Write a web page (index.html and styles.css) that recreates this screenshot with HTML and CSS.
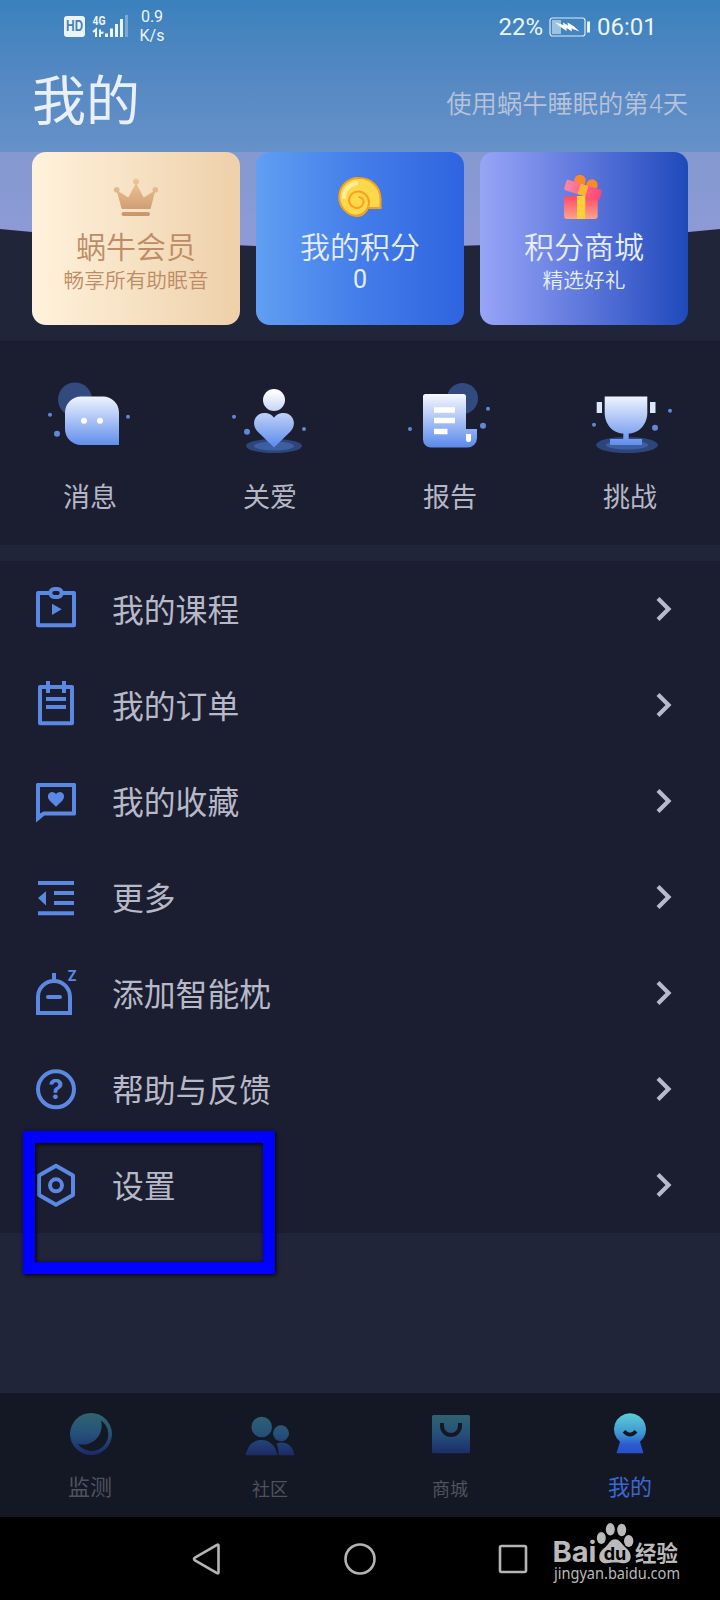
FILE: index.html
```html
<!DOCTYPE html>
<html lang="zh-CN">
<head>
  <meta charset="UTF-8">
  <meta name="viewport" content="width=device-width, initial-scale=1.0">
  <title>我的</title>
  <link rel="stylesheet" href="styles.css">
</head>
<body>
  <!-- Shared gradients -->
  <svg class="defs" width="0" height="0">
    <defs>
      <linearGradient id="gold" x1="0" y1="6" x2="0" y2="44" gradientUnits="userSpaceOnUse">
        <stop offset="0" stop-color="#f0c899"/>
        <stop offset="1" stop-color="#c8956a"/>
      </linearGradient>
      <linearGradient id="ice" x1="0" y1="14" x2="0" y2="70" gradientUnits="userSpaceOnUse">
        <stop offset="0" stop-color="#ffffff"/>
        <stop offset="1" stop-color="#5b8aec"/>
      </linearGradient>
      <linearGradient id="box" x1="0" y1="0" x2="0" y2="1">
        <stop offset="0" stop-color="#fb4a68"/>
        <stop offset="1" stop-color="#fba58a"/>
      </linearGradient>
      <linearGradient id="lid" x1="0" y1="0" x2="1" y2="0">
        <stop offset="0" stop-color="#fb86a4"/>
        <stop offset="1" stop-color="#fb4573"/>
      </linearGradient>
      <linearGradient id="dim" x1="0" y1="4" x2="0" y2="46" gradientUnits="userSpaceOnUse">
        <stop offset="0" stop-color="#2f6570"/>
        <stop offset="0.5" stop-color="#26507a"/>
        <stop offset="1" stop-color="#1b2a68"/>
      </linearGradient>
      <linearGradient id="lit" x1="0" y1="4" x2="0" y2="44" gradientUnits="userSpaceOnUse">
        <stop offset="0" stop-color="#5cd0d4"/>
        <stop offset="0.5" stop-color="#3f97d3"/>
        <stop offset="0.8" stop-color="#2b5ad0"/>
        <stop offset="1" stop-color="#2a4fca"/>
      </linearGradient>
    </defs>
  </svg>

  <div class="app">
    <header>
      <div class="status-bar">
        <svg class="signal" width="66" height="26" viewBox="0 0 66 26">
          <rect x="0" y="4" width="21" height="21" rx="3" fill="#eaf5fb"/>
          <text x="10.5" y="19" class="hd" text-anchor="middle" textLength="17" lengthAdjust="spacingAndGlyphs">HD</text>
          <text x="28.5" y="13" class="net" textLength="13" lengthAdjust="spacingAndGlyphs">4G</text>
          <path d="M29 20l3-2.500V25M36 17.500V25M36.500 21l3-.5" fill="none" stroke="#eaf5fb" stroke-width="2"/>
          <path d="M42.500 21.500v3.500M47.500 16.500v8.500M52.500 12v13M57.500 7v18" stroke="#eaf5fb" stroke-width="3"/>
          <path d="M62.500 3v22" stroke="#7aaad4" stroke-width="3"/>
        </svg>
        <div class="speed">0.9<br>K/s</div>
        <div class="battery-text">22%</div>
        <svg class="battery" width="42" height="20" viewBox="0 0 42 20">
          <rect x="1" y="1" width="35" height="18" rx="2.500" fill="none" stroke="#d9ebf6" stroke-width="1.200"/>
          <rect x="3" y="3" width="9" height="14" fill="#9cc2df"/>
          <path d="M6 5.500L14.500 8 14 5.500 19 8.500 18.500 5.500 24.500 9 30.500 14.500 22.500 11.500 23 14.500 17.500 11 17.500 14 11 9.500z" fill="#fff"/>
          <path d="M39.500 4.500v11" stroke="#e8f4fb" stroke-width="3"/>
        </svg>
        <div class="clock">06:01</div>
      </div>
      <div class="title-row">
        <h1>我的</h1>
        <span class="days">使用蜗牛睡眠的第4天</span>
      </div>
    </header>

    <section class="hero">
      <svg class="hero-bg" width="720" height="189" viewBox="0 0 720 189">
        <path d="M0 77Q360 114 720 77V189H0z" fill="#21253a"/>
      </svg>
      <div class="card card-vip">
        <svg width="48" height="48" viewBox="0 0 48 48" fill="url(#gold)">
          <circle cx="4.700" cy="17.700" r="2.800"/>
          <circle cx="24" cy="9.500" r="3"/>
          <circle cx="43.300" cy="17.700" r="2.800"/>
          <path d="M4.500 18L16.300 25.500 24 11 31.800 25.500 43.500 18 38.500 37H9.700z"/>
          <rect x="9.500" y="40" width="28.500" height="4" rx="2"/>
        </svg>
        <div class="card-title">蜗牛会员</div>
        <div class="card-sub">畅享所有助眠音</div>
      </div>
      <div class="card card-points">
        <svg width="48" height="48" viewBox="0 0 48 48">
          <path d="M23 6C35 6 44.500 15 44.500 27V36H32C29 41.500 26 44 21.500 44A19 19 0 0 1 23 6z" fill="#fed84a" stroke="#f7a01f" stroke-width="2"/>
          <path d="M8 27a15 15 0 0 1 14-16" fill="none" stroke="#ffee9a" stroke-width="4"/>
          <path d="M21 43.500C28 43 33 37 33 30A11 11 0 0 0 22 19.500 9 9 0 0 0 13 28.500 8 8 0 0 0 21 36 7 7 0 0 0 27.500 29.500 5 5 0 0 0 22.500 25" fill="none" stroke="#f7a01f" stroke-width="2"/>
        </svg>
        <div class="card-title">我的积分</div>
        <div class="card-num">0</div>
      </div>
      <div class="card card-mall">
        <svg width="48" height="48" viewBox="0 0 48 48">
          <circle cx="20" cy="8.500" r="5.700" fill="#fb8a26"/>
          <circle cx="32" cy="13" r="5.700" fill="#fb8a26"/>
          <rect x="4" y="24" width="33.700" height="23" rx="3" fill="url(#box)"/>
          <g transform="rotate(17 23 18)">
            <rect x="4.500" y="12.500" width="37" height="11" rx="2" fill="url(#lid)"/>
            <rect x="19" y="12.500" width="8" height="11" fill="#fdb52d"/>
          </g>
          <rect x="17" y="24" width="8.300" height="23" fill="#fdd03a"/>
        </svg>
        <div class="card-title">积分商城</div>
        <div class="card-sub">精选好礼</div>
      </div>
    </section>

    <section class="shortcuts">
      <div class="shortcut">
        <svg width="100" height="80" viewBox="0 0 100 80">
          <circle cx="35" cy="22.500" r="17" fill="#334a7f"/>
          <path d="M41 19.500H63A16 16 0 0 1 79 35.500V68H41A16 16 0 0 1 25 52V35.500A16 16 0 0 1 41 19.500z" fill="url(#ice)"/>
          <circle cx="44" cy="43.700" r="3" fill="#fff"/>
          <circle cx="60" cy="43.700" r="3" fill="#fff"/>
          <g fill="#6087d8">
            <circle cx="10" cy="37.700" r="2"/>
            <circle cx="17" cy="56.700" r="3"/>
            <circle cx="88" cy="39.700" r="2"/>
          </g>
        </svg>
        <span>消息</span>
      </div>
      <div class="shortcut">
        <svg width="100" height="80" viewBox="0 0 100 80">
          <ellipse cx="54" cy="69" rx="28" ry="7" fill="#2d457a"/>
          <ellipse cx="54" cy="69" rx="20" ry="4.500" fill="#3d5f9f"/>
          <circle cx="54" cy="23" r="11" fill="url(#ice)"/>
          <path d="M54 70.500L37.500 54.500C30 46 36 36 44 36 49 36 52 38 54 40.800 56 38 59 36 64 36 72 36 78 46 70.500 54.500z" fill="url(#ice)"/>
          <g fill="#6087d8">
            <circle cx="14" cy="39.700" r="2"/>
            <circle cx="27" cy="54.700" r="3"/>
            <circle cx="84" cy="52" r="2"/>
          </g>
        </svg>
        <span>关爱</span>
      </div>
      <div class="shortcut">
        <svg width="100" height="80" viewBox="0 0 100 80">
          <circle cx="62.500" cy="21.500" r="15.500" fill="#334a7f"/>
          <path d="M25.500 17H63.500A2.500 2.500 0 0 1 66 19.500V52H77V61A9.500 9.500 0 0 1 67.500 70.500H31A8 8 0 0 1 23 62.500V19.500A2.500 2.500 0 0 1 25.500 17z" fill="url(#ice)"/>
          <path d="M34 33h21M34 43.500h21M34 54.500h13.500" stroke="#fff" stroke-width="5.300"/>
          <path d="M66 57h5v5.500a2.500 2.500 0 0 1-5 0z" fill="#fff"/>
          <g fill="#6087d8">
            <circle cx="10" cy="52" r="2"/>
            <circle cx="83" cy="48.700" r="3"/>
            <circle cx="88" cy="31.700" r="2"/>
          </g>
        </svg>
        <span>报告</span>
      </div>
      <div class="shortcut">
        <svg width="100" height="80" viewBox="0 0 100 80">
          <ellipse cx="47" cy="68" rx="31" ry="8" fill="#2d457a"/>
          <ellipse cx="47" cy="68" rx="21" ry="4.500" fill="#3d5f9f"/>
          <path d="M24.700 19.500H67.300V36C67.300 47 59 56.500 48.700 56.500V62H62V68H30V62H43.300V56.500C33 56.500 24.700 47 24.700 36z" fill="url(#ice)"/>
          <path d="M16.700 25h5.300v11h-5.300zM70 25h5.500v11H70z" fill="#dde6fb"/>
          <g fill="#6087d8">
            <circle cx="14" cy="47.700" r="2"/>
            <circle cx="75" cy="50.700" r="3"/>
            <circle cx="90" cy="33.700" r="2"/>
          </g>
        </svg>
        <span>挑战</span>
      </div>
    </section>

    <main class="menu">
      <div class="menu-item">
        <svg class="menu-icon" viewBox="0 0 48 48">
          <rect x="6" y="8" width="36" height="32.300"/>
          <rect class="ring" x="18.300" y="4" width="11.400" height="8" rx="4"/>
          <path class="solid" d="M20 18.700L29.700 24.300 20 30z"/>
        </svg>
        <span>我的课程</span>
        <svg class="arrow" viewBox="0 0 24 32"><path d="M6 5.500L16.500 16 6 26.500"/></svg>
      </div>
      <div class="menu-item">
        <svg class="menu-icon" viewBox="0 0 48 48">
          <rect x="8" y="6" width="32" height="36.300"/>
          <path d="M16 0v12M32 0v12M14 18h20M14 26h20"/>
        </svg>
        <span>我的订单</span>
        <svg class="arrow" viewBox="0 0 24 32"><path d="M6 5.500L16.500 16 6 26.500"/></svg>
      </div>
      <div class="menu-item">
        <svg class="menu-icon" viewBox="0 0 48 48">
          <path class="solid" fill-rule="evenodd" d="M5 6H43L44 7V37.500L43 38.500H12.500L4 45.500V7zM8 10V36.500L11.500 34.500H40V10z"/>
          <path class="solid" d="M24 29.700L17.500 23.500C14 19 17 15 20 15 22 15 23.300 16 24 17.200 24.700 16 26 15 28 15 31 15 34 19 30.500 23.500z"/>
        </svg>
        <span>我的收藏</span>
        <svg class="arrow" viewBox="0 0 24 32"><path d="M6 5.500L16.500 16 6 26.500"/></svg>
      </div>
      <div class="menu-item">
        <svg class="menu-icon" viewBox="0 0 48 48">
          <path d="M6 10h36M22 20h20M22 30h20M6 40.300h36"/>
          <path class="solid" d="M6 25L14 18.300V32.500z"/>
        </svg>
        <span>更多</span>
        <svg class="arrow" viewBox="0 0 24 32"><path d="M6 5.500L16.500 16 6 26.500"/></svg>
      </div>
      <div class="menu-item">
        <svg class="menu-icon" viewBox="0 0 48 48">
          <path class="sharp" d="M6 44V28a16 16 0 0 1 32 0V44zM22 4v8"/>
          <path d="M16 28h12" stroke-linecap="round"/>
          <text class="zzz" x="35.500" y="12.300">Z</text>
        </svg>
        <span>添加智能枕</span>
        <svg class="arrow" viewBox="0 0 24 32"><path d="M6 5.500L16.500 16 6 26.500"/></svg>
      </div>
      <div class="menu-item">
        <svg class="menu-icon" viewBox="0 0 48 48">
          <circle cx="24" cy="24.300" r="18"/>
          <text class="question" x="24" y="34" text-anchor="middle">?</text>
        </svg>
        <span>帮助与反馈</span>
        <svg class="arrow" viewBox="0 0 24 32"><path d="M6 5.500L16.500 16 6 26.500"/></svg>
      </div>
      <div class="menu-item">
        <svg class="menu-icon" viewBox="0 0 48 48">
          <path d="M24 4.800L41 14.500V34L24 43.800 7 34V14.500z"/>
          <circle cx="24" cy="24.300" r="6"/>
        </svg>
        <span>设置</span>
        <svg class="arrow" viewBox="0 0 24 32"><path d="M6 5.500L16.500 16 6 26.500"/></svg>
        <div class="highlight"></div>
      </div>
    </main>

    <footer class="tabs">
      <div class="tab tab-large">
        <svg width="60" height="48" viewBox="0 0 60 48">
          <circle cx="31" cy="25" r="21" fill="url(#dim)"/>
          <path d="M41 11.500A16.700 16.700 0 1 1 18 35 19 19 0 0 0 41 11.500z" fill="#141824"/>
        </svg>
        <span>监测</span>
      </div>
      <div class="tab">
        <svg width="60" height="48" viewBox="0 0 60 48" fill="url(#dim)">
          <circle cx="21.700" cy="18" r="10.300"/>
          <path d="M5.700 46.300C7 37 13 31 21.500 31S36 37 37.300 46.300z"/>
          <circle cx="41" cy="24.300" r="8"/>
          <path d="M36.500 34.500C45 31.500 53 36 54.300 46.300H38.700C38.500 41.500 38 38 36.500 34.500z"/>
        </svg>
        <span>社区</span>
      </div>
      <div class="tab">
        <svg width="60" height="48" viewBox="0 0 60 48">
          <rect x="12" y="6" width="38" height="38.300" rx="1.500" fill="url(#dim)"/>
          <path d="M22 14v3a9 9 0 0 0 18 0v-3" fill="none" stroke="#141824" stroke-width="4"/>
        </svg>
        <span>商城</span>
      </div>
      <div class="tab tab-large active">
        <svg width="60" height="48" viewBox="0 0 60 48">
          <path d="M30 4.300A16 16 0 0 1 40 32.800L43.500 44.200H16.500L20 32.800A16 16 0 0 1 30 4.300z" fill="url(#lit)"/>
          <path d="M24 22.300Q30 29 36 22.300" fill="none" stroke="#141824" stroke-width="3.600"/>
        </svg>
        <span>我的</span>
      </div>
    </footer>

    <nav class="nav-bar">
      <svg width="34" height="34" viewBox="0 0 34 34"><path d="M28.500 3.500V30.500Q28.500 32 27 31L5 18.500Q3 17 5 15.500L27 3Q28.500 2 28.500 3.500z"/></svg>
      <svg width="34" height="34" viewBox="0 0 34 34"><circle cx="17" cy="17" r="14.500"/></svg>
      <svg width="34" height="34" viewBox="0 0 34 34"><rect x="4" y="4" width="26" height="26" rx="1.500"/></svg>
      <div class="watermark">
        <svg width="132" height="66" viewBox="0 0 132 66">
          <text class="bai" x="2.500" y="42.300" textLength="44" lengthAdjust="spacingAndGlyphs">Bai</text>
          <ellipse cx="51.300" cy="18" rx="4.500" ry="6"/>
          <ellipse cx="60.300" cy="9.300" rx="4.500" ry="6.200"/>
          <ellipse cx="71.700" cy="10" rx="4.500" ry="6.200"/>
          <ellipse cx="78.700" cy="21" rx="4.700" ry="6"/>
          <path d="M65 19.300C70 19.300 71.500 24 75 27S81 33 80.700 37.500C80 43 75 43.800 71 43S60 42.500 57 43.200C52 43.800 49.500 41 49.300 37.500 49 32.500 52 30 55.500 27S60 19.300 65 19.300z"/>
          <text class="du" x="65" y="39.500" text-anchor="middle">du</text>
          <text class="jingyan" x="85" y="40.500" textLength="43" lengthAdjust="spacingAndGlyphs">经验</text>
          <text class="url" x="4" y="59" textLength="126" lengthAdjust="spacingAndGlyphs">jingyan.baidu.com</text>
        </svg>
      </div>
    </nav>
  </div>
</body>
</html>
```
FILE: styles.css
```css
body {
  margin: 0;
  font-family: Roboto, 'Noto Sans CJK SC', sans-serif;
  background-color: #21253a;
}

.defs {
  position: absolute;
}

.app {
  width: 720px;
  height: 1600px;
  display: flex;
  flex-direction: column;
  overflow: hidden;
}

header {
  height: 152px;
  background: linear-gradient(#3a81bd, #5789c3 55%, #6691c9);
}

.status-bar {
  height: 54px;
  display: flex;
  align-items: center;
  padding: 0 64px;
  color: #eaf5fb;
}

.signal {
  margin-top: -4px;
}

.hd {
  font: bold 14px Inter, sans-serif;
  fill: #4481b8;
}

.net {
  font: bold 13px Roboto, sans-serif;
  fill: #eaf5fb;
}

.speed {
  width: 44px;
  font-size: 16px;
  line-height: 19px;
  text-align: center;
  margin-top: -2px;
}

.battery-text {
  margin-left: auto;
  font-size: 24px;
}

.battery {
  margin: 0 6px;
}

.clock {
  font-size: 24px;
  width: 59px;
}

.title-row {
  height: 98px;
  display: flex;
  align-items: center;
  justify-content: space-between;
  padding: 0 32px;
}

h1 {
  margin: 0;
  font-size: 54px;
  font-weight: 400;
  line-height: 80px;
  color: #eaf0fa;
}

.days {
  font-size: 25.3px;
  font-weight: 350;
  margin-top: -2px;
  color: #b8c3da;
}

.hero {
  position: relative;
  height: 189px;
  box-sizing: border-box;
  padding: 0 32px 16px;
  display: grid;
  grid-template-columns: repeat(3, 1fr);
  gap: 16px;
  background: linear-gradient(#8499cf, #8f9ad8 50%);
}

.hero-bg {
  position: absolute;
  top: 0;
  left: 0;
}

.card {
  position: relative;
  border-radius: 14px;
  padding-top: 20px;
  display: flex;
  flex-direction: column;
  align-items: center;
  color: #e6eefb;
}

.card-vip {
  background: linear-gradient(90deg, #fff2dc, #eed0aa);
  color: #bd8c66;
}

.card-points {
  background: linear-gradient(90deg, #609ff3, #4680ea 45%, #2f63e0);
}

.card-mall {
  background: linear-gradient(90deg, #98a5f7, #5e77dc 50%, #1f49bb);
}

.card-title {
  font-size: 30px;
  line-height: 40px;
  margin-top: 8px;
  font-weight: 350;
}

.card-sub {
  font-size: 20.7px;
  line-height: 28px;
  margin-top: -1px;
  font-weight: 350;
}

.card-num {
  font-size: 25px;
  line-height: 28px;
  margin-top: -2px;
}

.shortcuts {
  height: 168px;
  padding-top: 36px;
  margin-bottom: 16px;
  display: grid;
  grid-template-columns: repeat(4, 1fr);
  background-color: #1a1e30;
}

.shortcut {
  display: flex;
  flex-direction: column;
  align-items: center;
}

.shortcut span {
  margin-top: 23px;
  font-size: 27px;
  line-height: 36px;
  color: #b5b7c6;
}

.menu {
  background-color: #1a1e30;
}

.menu-item {
  position: relative;
  height: 96px;
  box-sizing: border-box;
  padding: 0 44px 0 32px;
  display: flex;
  align-items: center;
  font-size: 31.8px;
  color: #b7b9c8;
}

.menu-item span {
  margin-top: -2px;
}

.menu-icon {
  width: 48px;
  height: 48px;
  margin-right: 32px;
  overflow: visible;
  fill: none;
  stroke: #5b88e2;
  stroke-width: 4;
  stroke-linejoin: round;
}

.menu-icon .sharp {
  stroke-linejoin: miter;
}

.menu-icon .solid {
  fill: #5b88e2;
  stroke: none;
}

.menu-icon .ring {
  fill: #1a1e30;
}

.menu-icon text {
  fill: #5b88e2;
  stroke: none;
}

.zzz {
  font: bold 14px Inter, sans-serif;
}

.question {
  font: bold 27px Inter, sans-serif;
}

.arrow {
  width: 24px;
  height: 32px;
  margin-left: auto;
  fill: none;
  stroke: #b7bac9;
  stroke-width: 4.2;
}

.highlight {
  position: absolute;
  left: 22.5px;
  top: -6px;
  width: 228px;
  height: 119px;
  border: 12px solid #0000fe;
  box-shadow: 1px 1px 4px #000, inset 1px 1px 4px #000;
  z-index: 1;
}

.tabs {
  height: 124px;
  margin-top: auto;
  display: grid;
  grid-template-columns: repeat(4, 1fr);
  background-color: #141824;
}

.tab {
  padding-top: 16px;
  display: flex;
  flex-direction: column;
  align-items: center;
  font-size: 18px;
  color: #4f525e;
}

.tab span {
  line-height: 30px;
  margin-top: 18px;
}

.tab-large {
  font-size: 22px;
}

.tab-large span {
  margin-top: 16px;
}

.active {
  color: #3b68cf;
}

.nav-bar {
  position: relative;
  height: 83px;
  display: flex;
  justify-content: center;
  align-items: center;
  gap: 119px;
  background-color: #000;
}

.nav-bar > svg {
  fill: none;
  stroke: #b4b4b4;
  stroke-width: 2.6;
}

.watermark {
  position: absolute;
  left: 550px;
  top: 3px;
  fill: #bababa;
}

.bai {
  font: bold 29px Inter, sans-serif;
}

.du {
  font: bold 18px Inter, sans-serif;
  fill: #000;
}

.jingyan {
  font: bold 22px 'Noto Sans CJK SC', sans-serif;
}

.url {
  font: 15.5px 'Noto Sans', sans-serif;
}
```
